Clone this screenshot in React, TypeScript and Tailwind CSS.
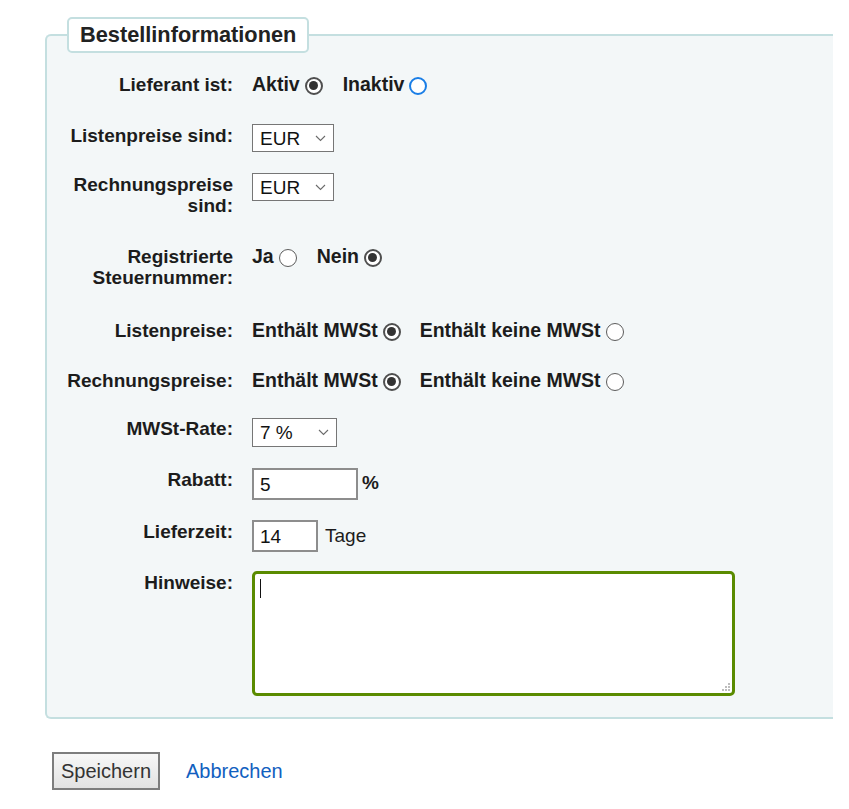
import React from 'react';

const font = { fontFamily: '"Liberation Sans", Arial, sans-serif' };

function Radio({ checked, focus }: { checked?: boolean; focus?: boolean }) {
  if (checked) {
    return (
      <span className="flex w-[18px] h-[18px] rounded-full border-2 border-[#4f4f4f] bg-white items-center justify-center">
        <span className="w-[9px] h-[9px] rounded-full bg-[#333]" />
      </span>
    );
  }
  return (
    <span
      className={
        'block w-[18px] h-[18px] rounded-full bg-white ' +
        (focus ? 'border-2 border-[#1a7ee6]' : 'border-[1.5px] border-[#5c5c5c]')
      }
    />
  );
}

function Option({ label, checked, focus }: { label: string; checked?: boolean; focus?: boolean }) {
  return (
    <span className="flex items-center gap-[5px] font-bold text-[19.5px] h-[21px]">
      {label}
      <span className="flex mt-[2px]">
        <Radio checked={checked} focus={focus} />
      </span>
    </span>
  );
}

function Select({ value, width }: { value: string; width: string }) {
  return (
    <span
      className={
        'flex items-center justify-between h-[28px] border border-[#767676] bg-white pl-[7px] pr-[7px] text-[#111] ' +
        width
      }
    >
      <span>{value}</span>
      <svg width="11" height="7" viewBox="0 0 11 7" fill="none">
        <path d="M1 1l4.5 4.5L10 1" stroke="#6b6b6b" strokeWidth="1.1" />
      </svg>
    </span>
  );
}

function Row({ label, className, labelClass, children }: { label: React.ReactNode; className?: string; labelClass?: string; children?: React.ReactNode }) {
  return (
    <li className={'flex items-start ' + (className || '')}>
      <label className={'w-[186px] text-right font-bold text-[#1c1c1c] shrink-0 ' + (labelClass || '')}>{label}</label>
      <div className="ml-[19px] flex items-start">{children}</div>
    </li>
  );
}

export default function App() {
  return (
    <div className="min-h-screen bg-white text-[19px] leading-[21px] text-[#1c1c1c] pt-[17px] pl-[45px]" style={font}>
      <fieldset className="w-[788px] border-2 border-r-0 border-[#c4dfe0] rounded-l-[6px] bg-[#f3f7f8] pb-[21px]">
        <legend className="ml-[20px] px-[11px] border-2 border-[#c4dfe0] rounded-[5px] bg-white text-[21.75px] leading-[32px] font-bold text-[#222]">
          Bestellinformationen
        </legend>
        <ol className="flex flex-col pt-[21px]">
          <Row label="Lieferant ist:">
            <div className="flex items-center gap-[20px]">
              <Option label="Aktiv" checked />
              <Option label="Inaktiv" focus />
            </div>
          </Row>

          <Row label="Listenpreise sind:" className="mt-[29px]" labelClass="mt-[1px]">
            <Select value="EUR" width="w-[82px]" />
          </Row>

          <Row label={<>Rechnungspreise<br />sind:</>} className="mt-[21px]" labelClass="mt-[1px]">
            <Select value="EUR" width="w-[82px]" />
          </Row>

          <Row label={<>Registrierte<br />Steuernummer:</>} className="mt-[30px]">
            <div className="flex items-center gap-[20px]">
              <Option label="Ja" />
              <Option label="Nein" checked />
            </div>
          </Row>

          <Row label="Listenpreise:" className="mt-[32px]">
            <div className="flex items-center gap-[19px]">
              <Option label="Enthält MWSt" checked />
              <Option label="Enthält keine MWSt" />
            </div>
          </Row>

          <Row label="Rechnungspreise:" className="mt-[29px]">
            <div className="flex items-center gap-[19px]">
              <Option label="Enthält MWSt" checked />
              <Option label="Enthält keine MWSt" />
            </div>
          </Row>

          <Row label="MWSt-Rate:" className="mt-[27px]">
            <Select value="7 %" width="w-[85px] h-[29px]" />
          </Row>

          <Row label="Rabatt:" className="mt-[21px]" labelClass="mt-[1px]">
            <span className="flex items-center w-[106px] h-[32px] border-2 border-[#8d8d8d] bg-white pl-[6px] text-[#111]">5</span>
            <span className="ml-[4px] mt-[4px] font-bold">%</span>
          </Row>

          <Row label="Lieferzeit:" className="mt-[20px]" labelClass="mt-[1px]">
            <span className="flex items-center w-[66px] h-[32px] border-2 border-[#8d8d8d] bg-white pl-[6px] text-[#111]">14</span>
            <span className="ml-[7px] mt-[5px]">Tage</span>
          </Row>

          <Row label="Hinweise:" className="mt-[19px]" labelClass="mt-[1px]">
            <div className="relative w-[483px] h-[125px] border-[3px] border-[#5a8b00] rounded-[5px] bg-white">
              <span className="absolute left-[5px] top-[5px] w-px h-[19px] bg-[#111]" />
              <svg className="absolute right-[2px] bottom-[2px]" width="8" height="8" viewBox="0 0 8 8">
                <rect x="6" y="0" width="2" height="2" fill="#bdbdbd" />
                <rect x="3" y="3" width="2" height="2" fill="#bdbdbd" />
                <rect x="6" y="3" width="2" height="2" fill="#bdbdbd" />
                <rect x="0" y="6" width="2" height="2" fill="#bdbdbd" />
                <rect x="3" y="6" width="2" height="2" fill="#bdbdbd" />
                <rect x="6" y="6" width="2" height="2" fill="#bdbdbd" />
              </svg>
            </div>
          </Row>
        </ol>
      </fieldset>

      <div className="flex items-center mt-[33px] pl-[7px] gap-[26px]">
        <button className="w-[108px] h-[38px] border-2 border-[#7d7d7d] bg-gradient-to-b from-[#f7f7f7] to-[#e2e2e2] text-[20px] text-[#333]">
          Speichern
        </button>
        <a href="#" className="text-[20px] text-[#1160c0]">Abbrechen</a>
      </div>
    </div>
  );
}
